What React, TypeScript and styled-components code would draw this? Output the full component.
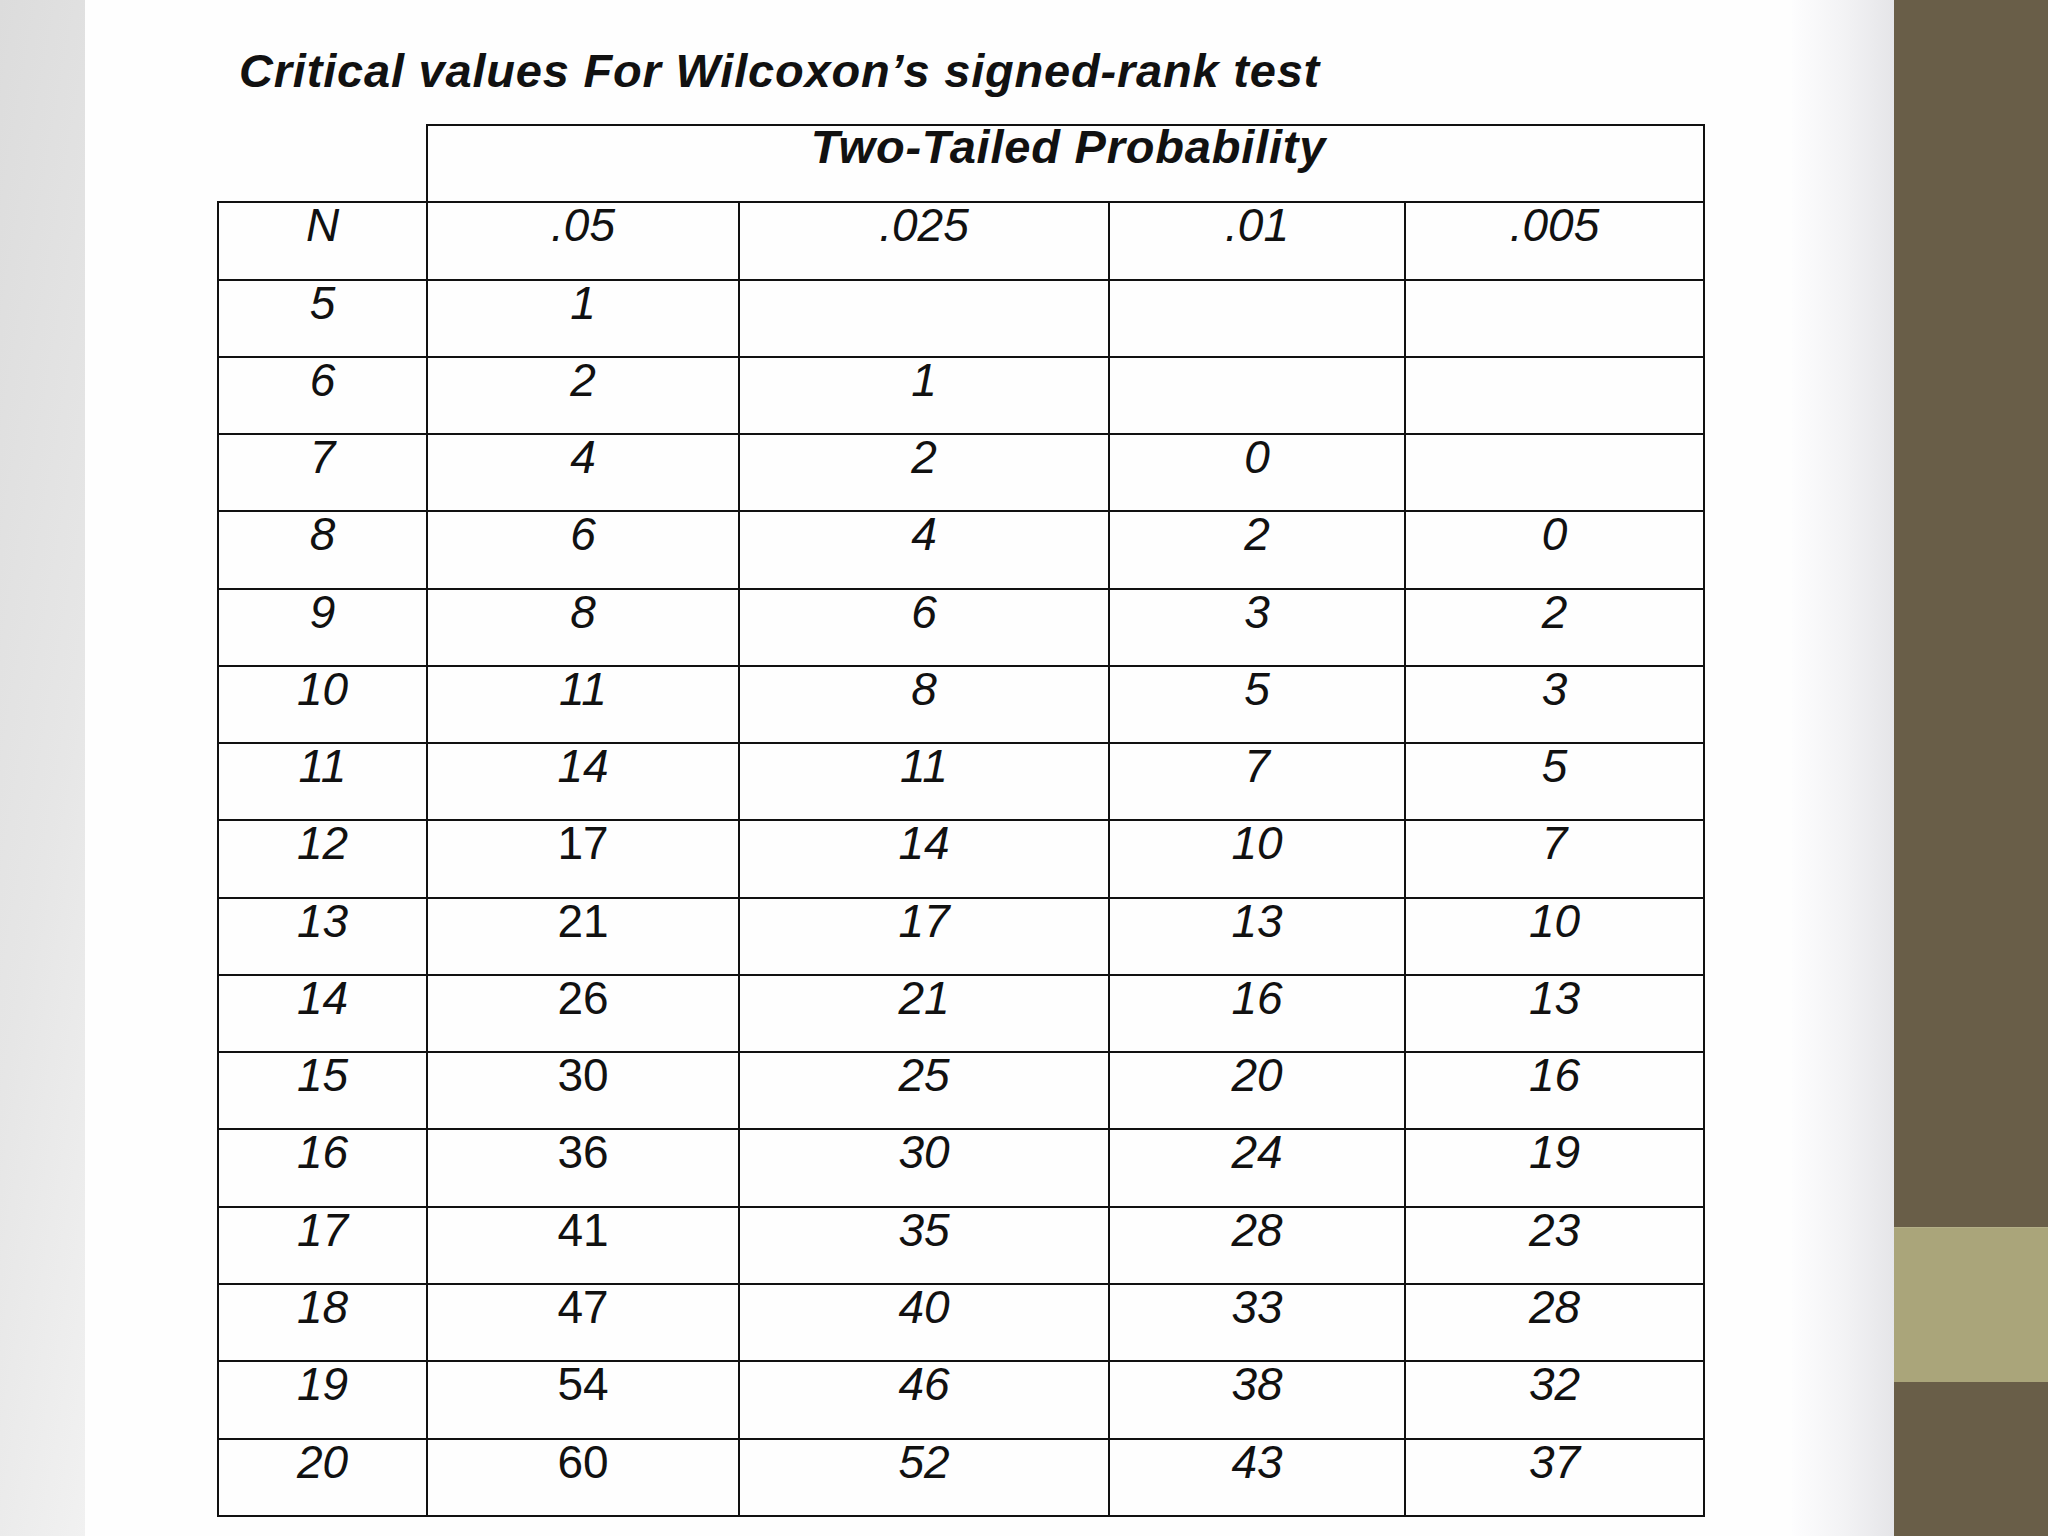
import React from 'react';
import styled, { createGlobalStyle } from 'styled-components';

const GlobalStyle = createGlobalStyle`
  html, body {
    margin: 0;
    padding: 0;
    background: #ffffff;
  }
  body {
    font-family: "Liberation Sans", Arial, sans-serif;
    color: #111;
  }
`;

const Page = styled.div`
  display: flex;
  width: 2048px;
  height: 1536px;
  overflow: hidden;
`;

const LeftEdge = styled.div`
  width: 85px;
  flex-shrink: 0;
  background: linear-gradient(100deg, #dcdcdc 0%, #e6e6e6 55%, #f1f1f1 100%);
`;

const Slide = styled.div`
  flex: 1;
  display: flex;
  flex-direction: column;
  padding: 47px 0 0 132px;
  background: #fefefe;
`;

const RightShade = styled.div`
  width: 102px;
  flex-shrink: 0;
  background: linear-gradient(90deg, #fdfdfe 0%, #f3f3f5 50%, #e5e5e8 100%);
`;

const Sidebar = styled.div`
  width: 154px;
  flex-shrink: 0;
  display: flex;
  flex-direction: column;
`;

const SideBlock = styled.div<{ $light?: boolean; $h?: number }>`
  flex: ${(p) => (p.$h ? `0 0 ${p.$h}px` : '1')};
  background: ${(p) => (p.$light ? '#aaa57a' : '#695e48')};
  border-top: ${(p) => (p.$light ? '1px solid #b4af88' : 'none')};
`;

const Title = styled.h1`
  margin: 0 0 30px 22px;
  font-size: 47px;
  line-height: 47px;
  font-weight: bold;
  font-style: italic;
  letter-spacing: 0.8px;
  white-space: nowrap;
`;

const Table = styled.table`
  border-collapse: collapse;
  table-layout: fixed;
  width: 1486px;
`;

const Col = styled.col<{ $w: number }>`
  width: ${(p) => p.$w}px;
`;

const Row = styled.tr`
  height: 77.28px;
`;

const Cell = styled.td<{ $upright?: boolean }>`
  border: 2px solid #111;
  padding: 0;
  vertical-align: top;
  text-align: center;
  font-size: 46px;
  line-height: 44px;
  font-style: ${(p) => (p.$upright ? 'normal' : 'italic')};
`;

const Corner = styled.td`
  border: none;
  border-right: 2px solid #111;
  border-bottom: 2px solid #111;
`;

const SpanHead = styled.td`
  border: 2px solid #111;
  padding: 0 0 0 6px;
  vertical-align: top;
  text-align: center;
  font-size: 47px;
  line-height: 42px;
  font-weight: bold;
  font-style: italic;
  letter-spacing: 0.8px;
`;

const widths = [209, 312, 370, 296, 299];
const levels = ['.05', '.025', '.01', '.005'];

const rows: (number | null)[][] = [
  [5, 1, null, null, null],
  [6, 2, 1, null, null],
  [7, 4, 2, 0, null],
  [8, 6, 4, 2, 0],
  [9, 8, 6, 3, 2],
  [10, 11, 8, 5, 3],
  [11, 14, 11, 7, 5],
  [12, 17, 14, 10, 7],
  [13, 21, 17, 13, 10],
  [14, 26, 21, 16, 13],
  [15, 30, 25, 20, 16],
  [16, 36, 30, 24, 19],
  [17, 41, 35, 28, 23],
  [18, 47, 40, 33, 28],
  [19, 54, 46, 38, 32],
  [20, 60, 52, 43, 37],
];

export default function App() {
  return (
    <>
      <GlobalStyle />
      <Page>
        <LeftEdge />
        <Slide>
          <Title>Critical values For Wilcoxon’s signed-rank test</Title>
          <Table>
            <colgroup>
              {widths.map((w, i) => (
                <Col key={i} $w={w} />
              ))}
            </colgroup>
            <tbody>
              <Row>
                <Corner />
                <SpanHead colSpan={4}>Two-Tailed Probability</SpanHead>
              </Row>
              <Row>
                <Cell>N</Cell>
                {levels.map((l) => (
                  <Cell key={l}>{l}</Cell>
                ))}
              </Row>
              {rows.map((r) => (
                <Row key={r[0] as number}>
                  {r.map((v, i) => (
                    <Cell key={i} $upright={i === 1 && (v as number) >= 17}>
                      {v === null ? '' : v}
                    </Cell>
                  ))}
                </Row>
              ))}
            </tbody>
          </Table>
        </Slide>
        <RightShade />
        <Sidebar>
          <SideBlock />
          <SideBlock $light $h={154} />
          <SideBlock $h={154} />
        </Sidebar>
      </Page>
    </>
  );
}
